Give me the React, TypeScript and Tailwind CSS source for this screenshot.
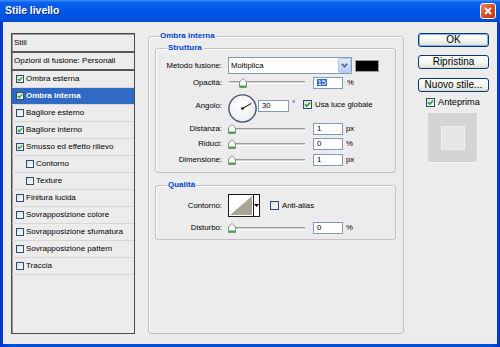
import React from "react";

function CB({ checked, small }: { checked?: boolean; small?: boolean }) {
  return (
    <span
      className={
        small
          ? "flex-none w-[8px] h-[8px] border border-[#2a4d78] bg-[linear-gradient(135deg,#dcdcd7,#ffffff)] flex items-center justify-center"
          : "flex-none w-[9px] h-[9px] border border-[#2a4d78] bg-[linear-gradient(135deg,#dcdcd7,#ffffff)] flex items-center justify-center"
      }
    >
      {checked ? (
        <svg viewBox="0 0 7 7" className="w-full h-full">
          <path d="M1 3.4 L2.8 5.2 L6 1.6" stroke="#21a121" strokeWidth="1.6" fill="none" />
        </svg>
      ) : null}
    </span>
  );
}

function Thumb({ left }: { left: string }) {
  return (
    <svg width="8" height="10" viewBox="0 0 8 10" className={"absolute top-[1px] " + left}>
      <path d="M0.5 9.5 V4 L4 0.5 L7.5 4 V9.5 Z" fill="#ffffff" stroke="#8a8a8a" strokeWidth="1" />
      <rect x="1" y="7.5" width="6" height="1.6" fill="#2fb52f" />
    </svg>
  );
}

function Slider({ left }: { left: string }) {
  return (
    <div className="relative ml-[6px] w-[80px] h-[12px] flex items-center flex-none">
      <div className="ml-[1px] w-[76px] h-[3px] border-t border-t-[#9a9a9a] border-b border-b-white bg-[#d4d2cc]" />
      <Thumb left={left} />
    </div>
  );
}

function Input({ children, w }: { children: React.ReactNode; w: string }) {
  return (
    <div className={"flex-none h-[12px] border border-[#7f9db9] bg-white flex items-center pl-[3px] leading-none " + w}>
      {children}
    </div>
  );
}

function Legend({ text, left }: { text: string; left: string }) {
  return (
    <span
      className={
        "absolute top-[-6px] px-[1px] bg-[#ececec] text-[#0046d5] font-bold text-[8px] leading-[10px] " + left
      }
    >
      {text}
    </span>
  );
}

function Label({ children }: { children: React.ReactNode }) {
  return <span className="flex-none w-[66px] text-right leading-[12px]">{children}</span>;
}

function SliderRow({ label, value, unit, cls }: { label: string; value: string; unit: string; cls: string }) {
  return (
    <div className={"flex items-center h-[12px] " + cls}>
      <Label>{label}</Label>
      <Slider left="left-[0px]" />
      <div className="ml-[5px]">
        <Input w="w-[30px]">{value}</Input>
      </div>
      <span className="ml-[3px] leading-none">{unit}</span>
    </div>
  );
}

const rows: { t: string; c?: boolean; sel?: boolean; ind?: boolean }[] = [
  { t: "Ombra esterna", c: true },
  { t: "Ombra interna", c: true, sel: true },
  { t: "Bagliore esterno" },
  { t: "Bagliore interno", c: true },
  { t: "Smusso ed effetto rilievo", c: true },
  { t: "Contorno", ind: true },
  { t: "Texture", ind: true },
  { t: "Finitura lucida" },
  { t: "Sovrapposizione colore" },
  { t: "Sovrapposizione sfumatura" },
  { t: "Sovrapposizione pattern" },
  { t: "Traccia" },
];

function LeftPanel() {
  return (
    <div className="flex-none mt-[11px] w-[124px] h-[301px] border border-[#4a4a4a] shadow-[inset_1px_1px_0_#9c9c9c] flex flex-col text-[8px]">
      <div className="h-[19px] border-b-2 border-[#555555] flex items-center pl-[2px] font-normal">Stili</div>
      <div className="h-[18px] border-b-2 border-[#555555] flex items-center pl-[2px]">Opzioni di fusione: Personali</div>
      {rows.map((r) => (
        <div
          key={r.t}
          className={
            (r.sel ? "bg-[#316ac5] text-white font-bold " : "") +
            (r.ind ? "pl-[14px] " : "pl-[4px] ") +
            "h-[17px] flex-none border-b border-[#d6d6d6] flex items-center"
          }
        >
          <CB checked={r.c} small />
          <span className="ml-[2px]">{r.t}</span>
        </div>
      ))}
    </div>
  );
}

function Dial() {
  return (
    <svg width="29" height="29" viewBox="0 0 29 29" className="flex-none ml-[6px]">
      <defs>
        <radialGradient id="dg" cx="0.4" cy="0.35" r="0.7">
          <stop offset="0" stopColor="#ffffff" />
          <stop offset="1" stopColor="#ececec" />
        </radialGradient>
      </defs>
      <circle cx="14.5" cy="14.5" r="13.6" fill="url(#dg)" stroke="#46557c" strokeWidth="1.4" />
      <line x1="14.5" y1="14.5" x2="23.3" y2="9.4" stroke="#000" strokeWidth="1" />
      <circle cx="14.5" cy="14.5" r="1.3" fill="#000" />
    </svg>
  );
}

function Main() {
  return (
    <div className="flex-none relative mt-[14px] ml-[13px] w-[256px] h-[298px] border border-[#c2c2c2] rounded-[3px] shadow-[inset_1px_1px_0_#ffffff] text-[7.8px]">
      <Legend text="Ombra interna" left="left-[10px]" />
      <div className="relative ml-[6px] mt-[11px] w-[241px] h-[125px] border border-[#c2c2c2] rounded-[3px] shadow-[inset_1px_1px_0_#ffffff] pt-[8px]">
        <Legend text="Struttura" left="left-[11px]" />
        <div className="flex items-center h-[17px]">
          <Label>Metodo fusione:</Label>
          <div className="flex-none ml-[6px] w-[124px] h-[17px] border border-[#7f9db9] bg-white flex items-center justify-between pl-[2px]">
            <span className="leading-none">Moltiplica</span>
            <span className="w-[13px] h-[15px] rounded-[2px] border border-[#b7c9f2] bg-[linear-gradient(to_bottom,#e4ecfd,#b7cbf6)] flex items-center justify-center">
              <svg width="7" height="5" viewBox="0 0 7 5">
                <path d="M0.8 0.8 L3.5 3.6 L6.2 0.8" stroke="#4d6185" strokeWidth="1.6" fill="none" />
              </svg>
            </span>
          </div>
          <span className="flex-none ml-[3px] w-[24px] h-[12px] bg-black border border-[#9a9a9a]" />
        </div>
        <div className="flex items-center h-[13px] mt-[2px]">
          <Label>Opacità:</Label>
          <Slider left="left-[11px]" />
          <div className="ml-[5px]">
            <Input w="w-[30px]">
              <span className="bg-[#316ac5] text-white px-[0.5px]">15</span>
            </Input>
          </div>
          <span className="ml-[4px] leading-none">%</span>
        </div>
        <div className="flex items-start h-[29px] mt-[5px]">
          <span className="mt-[6px] flex-none w-[66px] text-right leading-[12px]">Angolo:</span>
          <Dial />
          <div className="ml-[1px] mt-[6px]">
            <Input w="w-[31px]">30</Input>
          </div>
          <span className="ml-[3px] mt-[6px] w-[6px] leading-none">°</span>
          <div className="ml-[5px] mt-[6px] flex items-center">
            <CB checked />
            <span className="ml-[3px] leading-none">Usa luce globale</span>
          </div>
        </div>
        <SliderRow label="Distanza:" value="1" unit="px" cls="mt-0" />
        <SliderRow label="Riduci:" value="0" unit="%" cls="mt-[3px]" />
        <SliderRow label="Dimensione:" value="1" unit="px" cls="mt-[4px]" />
      </div>
      <div className="relative ml-[6px] mt-[12px] w-[241px] h-[55px] border border-[#c2c2c2] rounded-[3px] shadow-[inset_1px_1px_0_#ffffff] pt-[8px]">
        <Legend text="Qualità" left="left-[11px]" />
        <div className="flex items-center h-[23px]">
          <Label>Contorno:</Label>
          <div className="flex-none ml-[6px] w-[32px] h-[23px] border border-[#1a1a1a] bg-white flex">
            <svg width="24" height="21" viewBox="0 0 24 21" className="flex-none">
              <rect x="0" y="0" width="24" height="21" fill="#ffffff" />
              <path d="M1 20 L23 1 L23 20 Z" fill="#a9a597" />
            </svg>
            <span className="flex-1 border-l border-[#1a1a1a] flex items-center justify-center">
              <svg width="5" height="3" viewBox="0 0 5 3">
                <path d="M0 0 L5 0 L2.5 3 Z" fill="#000" />
              </svg>
            </span>
          </div>
          <div className="ml-[10px] flex items-center">
            <CB />
            <span className="ml-[3px] leading-none">Anti-alias</span>
          </div>
        </div>
        <SliderRow label="Disturbo:" value="0" unit="%" cls="mt-[5px]" />
      </div>
    </div>
  );
}

const btn =
  "h-[14px] rounded-[3px] border border-[#003c74] bg-[linear-gradient(to_bottom,#ffffff,#f3f3ef_60%,#dcdad2)] text-[10px] leading-none flex items-center justify-center";

function RightCol() {
  return (
    <div className="flex-none mt-[11px] ml-[14px] w-[71px] flex flex-col">
      <div className={btn + " shadow-[inset_0_0_0_1px_#8db2ef]"}>OK</div>
      <div className={btn + " mt-[8px]"}>Ripristina</div>
      <div className={btn + " mt-[9px]"}>Nuovo stile...</div>
      <div className="mt-[6px] ml-[8px] flex items-center h-[9px]">
        <CB checked />
        <span className="ml-[3px] text-[9.2px] leading-none">Anteprima</span>
      </div>
      <div className="mt-[6px] ml-[10px] w-[50px] h-[50px] bg-[#d4d4d4] border-r border-b border-[#f6f6f6] flex items-center justify-center">
        <div className="w-[24px] h-[24px] bg-[#e6e6e6] border border-[#efefef]" />
      </div>
    </div>
  );
}

function TitleBar() {
  return (
    <div className="flex-none h-[22px] flex items-center bg-[linear-gradient(to_bottom,#3d8ff8_0%,#0a60ef_12%,#0056e6_50%,#0052e0_85%,#0046cc_100%)]">
      <span className="ml-[5px] text-white font-bold text-[10.4px] [text-shadow:1px_1px_0_#0b2a9c]">Stile livello</span>
      <div className="ml-auto mr-[4px] w-[16px] h-[16px] rounded-[3px] border border-white bg-[linear-gradient(135deg,#ef8a62,#d8461e_55%,#c23a18)] flex items-center justify-center">
        <svg width="8" height="8" viewBox="0 0 8 8">
          <path d="M1 1 L7 7 M7 1 L1 7" stroke="#ffffff" strokeWidth="1.8" />
        </svg>
      </div>
    </div>
  );
}

export default function App() {
  return (
    <div className="w-[500px] h-[347px] flex flex-col bg-[linear-gradient(to_right,#0034c8,#0050e0_2%,#0050e0_98%,#0034c8)] font-['Liberation_Sans',Arial,sans-serif] text-black overflow-hidden">
      <TitleBar />
      <div className="flex-1 mx-[3px] mb-[3px] bg-[#ececec] flex items-start pl-[8px]">
        <LeftPanel />
        <Main />
        <RightCol />
      </div>
    </div>
  );
}
